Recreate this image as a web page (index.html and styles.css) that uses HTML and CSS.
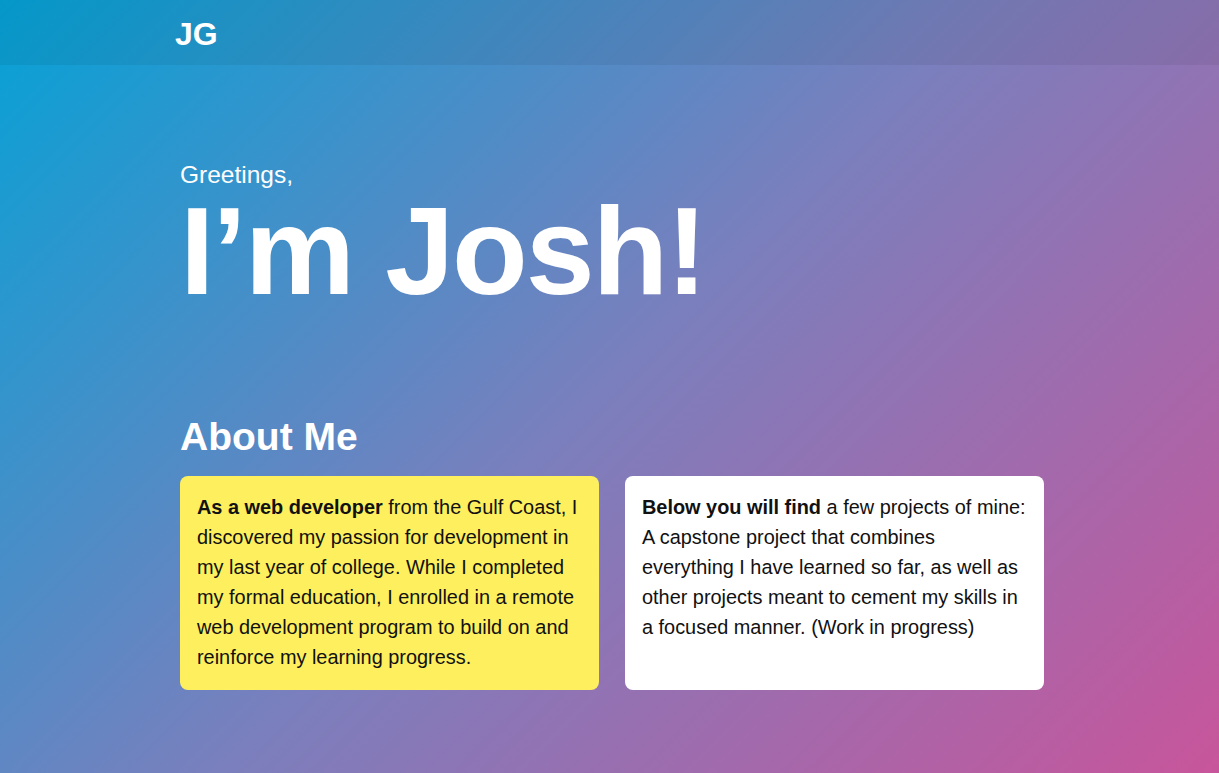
FILE: index.html
```html
<!DOCTYPE html>
<html lang="en">
<head>
<meta charset="utf-8">
<title>Josh G</title>
<link rel="stylesheet" href="styles.css">
</head>
<body>
<header class="topbar">
  <div class="topbar-inner"><span class="logo">JG</span></div>
</header>
<main class="content">
  <section class="hero">
    <p class="greeting">Greetings,</p>
    <h1 class="title">I’m Josh!</h1>
  </section>
  <section class="about">
    <h2 class="about-title">About Me</h2>
    <div class="cards">
      <div class="card card-yellow">
        <p><strong>As a web developer</strong> from the Gulf Coast, I discovered my passion for development in my last year of college. While I completed my formal education, I enrolled in a remote web development program to build on and reinforce my learning progress.</p>
      </div>
      <div class="card card-white">
        <p><strong>Below you will find</strong> a few projects of mine: A capstone project that combines everything I have learned so far, as well as other projects meant to cement my skills in a focused manner. (Work in progress)</p>
      </div>
    </div>
  </section>
</main>
</body>
</html>
```
FILE: styles.css
```css
* { box-sizing: border-box; }
html, body { height: 100%; }
body {
  margin: 0;
  font-family: "Liberation Sans", Arial, Helvetica, sans-serif;
  color: #fff;
  background: linear-gradient(135deg, #05a2d6 0%, #7b7fbd 50%, #c8559b 100%);
  min-height: 773px;
  overflow: hidden;
}
.topbar {
  height: 65px;
  background: rgba(0, 0, 0, 0.06);
}
.topbar-inner {
  padding-left: 175px;
  height: 100%;
  display: flex;
  align-items: center;
}
.logo {
  font-weight: 700;
  font-size: 32px;
  line-height: 36px;
  margin-top: 2px;
}
.content {
  width: 864px;
  margin-left: 180px;
}
.hero { padding-top: 96px; }
.greeting {
  margin: 0;
  font-size: 24.5px;
  line-height: 28px;
}
.title {
  margin: 0;
  font-size: 124px;
  line-height: 124px;
  font-weight: 700;
  letter-spacing: -2.1px;
}
.about { margin-top: 104px; }
.about-title {
  margin: 0 0 19px;
  font-size: 39px;
  line-height: 40px;
  font-weight: 700;
}
.cards {
  display: grid;
  grid-template-columns: 1fr 1fr;
  gap: 26px;
}
.card {
  border-radius: 8px;
  padding: 16px 17px;
  color: #111;
  font-size: 19.9px;
  line-height: 30px;
  min-height: 214px;
}
.card p { margin: 0; }
.card strong { font-weight: 700; }
.card-yellow { background: #fdef5e; }
.card-white { background: #fff; }
```
